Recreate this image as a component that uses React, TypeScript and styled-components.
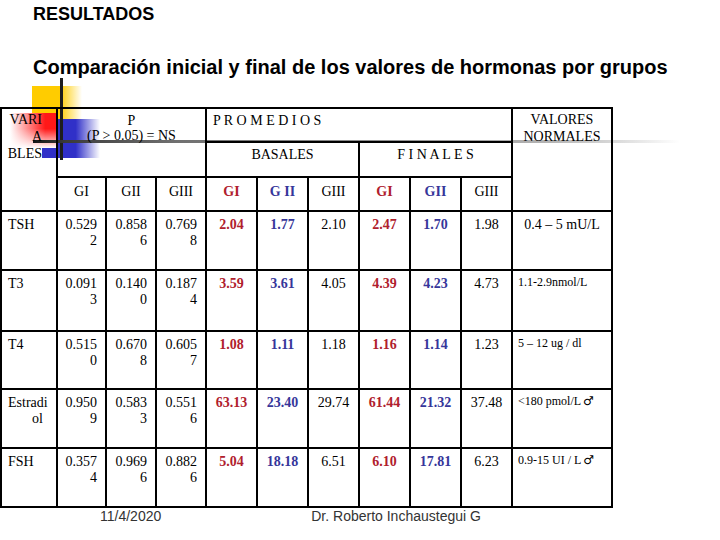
import React from 'react';
import styled, { createGlobalStyle } from 'styled-components';

const Global = createGlobalStyle`
  html, body { margin: 0; padding: 0; background: #fff; }
  body { width: 720px; height: 540px; overflow: hidden; }
`;

const Page = styled.div`
  position: relative;
  width: 720px;
  height: 540px;
  background: #fff;
  overflow: hidden;
`;

const Header = styled.header`
  position: relative;
  z-index: 2;
  height: 107px;
  box-sizing: border-box;
  padding: 5px 0 0 33px;
  font-family: "Liberation Sans", Arial, sans-serif;
  font-weight: bold;
  color: #000;
`;

const Title = styled.h1`
  margin: 0;
  font-size: 18px;
  line-height: 18px;
  font-weight: bold;
`;

const Subtitle = styled.h2`
  margin: 34px 0 0;
  font-size: 20px;
  line-height: 20px;
  font-weight: bold;
  white-space: nowrap;
`;

/* decorative PowerPoint ornaments (lie under the table) */
const YellowBlock = styled.div`
  position: absolute;
  left: 32px;
  top: 86px;
  width: 50px;
  height: 33px;
  background: linear-gradient(to right, #ffcc00 0%, #ffcc00 55%, rgba(255, 204, 0, 0) 100%);
`;

const BlueBlock = styled.div`
  position: absolute;
  left: 42px;
  top: 119px;
  width: 58px;
  height: 39px;
  background: linear-gradient(to right, #3030c8 0%, #3030c8 58%, rgba(48, 48, 200, 0) 100%);
`;

const RedBlock = styled.div`
  position: absolute;
  left: 10px;
  top: 113px;
  width: 47px;
  height: 35px;
  background:
    linear-gradient(to bottom, rgba(255, 255, 255, 0) 0%, rgba(255, 255, 255, 0) 45%, #fff 100%),
    linear-gradient(to left, #ff1818 0%, #ff1818 25%, #fff 100%);
`;

const VRule = styled.div`
  position: absolute;
  left: 60px;
  top: 78px;
  width: 3px;
  height: 82px;
  background: #1e1e1e;
`;

const HRule = styled.div`
  position: absolute;
  left: 33px;
  top: 140px;
  width: 647px;
  height: 3px;
  background: linear-gradient(
    to right,
    #151515 0%,
    #3a3a3a 5%,
    #707070 22%,
    #8c8c8c 50%,
    #b4b4b4 80%,
    rgba(255, 255, 255, 0) 100%
  );
`;

const Table = styled.div`
  position: relative;
  z-index: 1;
  display: grid;
  grid-template-columns: 56px 49px 50px 50px repeat(6, 51px) 100px;
  grid-template-rows: 34px 35px 34px 59px 61px 58px 59px 59px;
  width: 613px;
  box-sizing: border-box;
  border-top: 2px solid #000;
  border-left: 2px solid #000;
  font-family: "Liberation Serif", "Times New Roman", serif;
  font-size: 14px;
  color: #000;
`;

type Align = 'left' | 'center' | 'right';

const Cell = styled.div<{ $area?: string; $align?: Align; $pad?: string; $lh?: number }>`
  grid-area: ${(p) => p.$area ?? 'auto'};
  box-sizing: border-box;
  min-width: 0;
  border-right: 2px solid #000;
  border-bottom: 2px solid #000;
  padding: ${(p) => p.$pad ?? '5px 0 0'};
  text-align: ${(p) => p.$align ?? 'center'};
  line-height: ${(p) => p.$lh ?? 16}px;
  white-space: nowrap;
`;

const Line = styled.span<{ $indent?: number }>`
  display: block;
  padding-left: ${(p) => p.$indent ?? 0}px;
`;

type Tone = 'red' | 'blue' | 'plain';

const Toned = styled.span<{ $tone: Tone }>`
  color: ${(p) => (p.$tone === 'red' ? '#b0202d' : p.$tone === 'blue' ? '#36369a' : '#000')};
  font-weight: ${(p) => (p.$tone === 'plain' ? 'normal' : 'bold')};
`;

const NormalText = styled.span<{ $small?: boolean }>`
  font-size: ${(p) => (p.$small ? 12 : 14)}px;
`;

const Male = styled.span`
  font-family: "DejaVu Sans", sans-serif;
  font-size: 12px;
  font-weight: bold;
  margin-left: 2px;
`;

const Footer = styled.footer`
  position: relative;
  z-index: 1;
  display: flex;
  gap: 150px;
  padding-left: 100px;
  font-family: "Liberation Sans", Arial, sans-serif;
  font-size: 14px;
  line-height: 16px;
  color: #333;
`;

type Row = {
  label: string[];
  p: [string, string][];
  basal: string[];
  final: string[];
  normal: string;
  male?: boolean;
  centered?: boolean;
};

const rows: Row[] = [
  {
    label: ['TSH'],
    p: [['0.529', '2'], ['0.858', '6'], ['0.769', '8']],
    basal: ['2.04', '1.77', '2.10'],
    final: ['2.47', '1.70', '1.98'],
    normal: '0.4 – 5 mU/L',
    centered: true,
  },
  {
    label: ['T3'],
    p: [['0.091', '3'], ['0.140', '0'], ['0.187', '4']],
    basal: ['3.59', '3.61', '4.05'],
    final: ['4.39', '4.23', '4.73'],
    normal: '1.1-2.9nmol/L',
  },
  {
    label: ['T4'],
    p: [['0.515', '0'], ['0.670', '8'], ['0.605', '7']],
    basal: ['1.08', '1.11', '1.18'],
    final: ['1.16', '1.14', '1.23'],
    normal: '5 – 12 ug / dl',
  },
  {
    label: ['Estradi', 'ol'],
    p: [['0.950', '9'], ['0.583', '3'], ['0.551', '6']],
    basal: ['63.13', '23.40', '29.74'],
    final: ['61.44', '21.32', '37.48'],
    normal: '<180 pmol/L',
    male: true,
  },
  {
    label: ['FSH'],
    p: [['0.357', '4'], ['0.969', '6'], ['0.882', '6']],
    basal: ['5.04', '18.18', '6.51'],
    final: ['6.10', '17.81', '6.23'],
    normal: '0.9-15 UI / L',
    male: true,
  },
];

const tones: Tone[] = ['red', 'blue', 'plain'];

const groupHeads: { text: string; tone: Tone }[] = [
  { text: 'GI', tone: 'plain' },
  { text: 'GII', tone: 'plain' },
  { text: 'GIII', tone: 'plain' },
  { text: 'GI', tone: 'red' },
  { text: 'G II', tone: 'blue' },
  { text: 'GIII', tone: 'plain' },
  { text: 'GI', tone: 'red' },
  { text: 'GII', tone: 'blue' },
  { text: 'GIII', tone: 'plain' },
];

export default function App() {
  return (
    <Page>
      <Global />
      <YellowBlock />
      <BlueBlock />
      <RedBlock />
      <VRule />
      <HRule />
      <Header>
        <Title>RESULTADOS</Title>
        <Subtitle>Comparación inicial y final de los valores de hormonas por grupos</Subtitle>
      </Header>
      <Table>
        <Cell $area="1 / 1 / 4 / 2" $align="right" $pad="2px 14px 0 0" $lh={17}>
          <Line>VARI</Line>
          <Line>A</Line>
          <Line>BLES</Line>
        </Cell>
        <Cell $area="1 / 2 / 3 / 5" $pad="4px 0 0" $lh={15}>
          <Line>P</Line>
          <Line>(P &gt; 0.05) = NS</Line>
        </Cell>
        <Cell $area="1 / 5 / 2 / 11" $align="left" $pad="4px 0 0 6px">
          P R O M E D I O S
        </Cell>
        <Cell $area="1 / 11 / 4 / 12" $pad="2px 0 0" $lh={17}>
          <Line>VALORES</Line>
          <Line>NORMALES</Line>
        </Cell>
        <Cell $area="2 / 5 / 3 / 8" $pad="4px 0 0">
          BASALES
        </Cell>
        <Cell $area="2 / 8 / 3 / 11" $pad="4px 0 0">
          F I N A L E S
        </Cell>
        {groupHeads.map((g, i) => (
          <Cell key={`h${i}`} $area={`3 / ${i + 2} / 4 / ${i + 3}`} $pad="6px 0 0">
            <Toned $tone={g.tone}>{g.text}</Toned>
          </Cell>
        ))}
        {rows.map((r, ri) => {
          const rowLine = ri + 4;
          return (
            <React.Fragment key={r.label.join('')}>
              <Cell $area={`${rowLine} / 1 / ${rowLine + 1} / 2`} $align="left" $pad="5px 0 0 6px">
                {r.label.map((l, li) => (
                  <Line key={li} $indent={li === 1 ? 24 : 0}>
                    {l}
                  </Line>
                ))}
              </Cell>
              {r.p.map(([a, b], pi) => (
                <Cell
                  key={`p${pi}`}
                  $area={`${rowLine} / ${pi + 2} / ${rowLine + 1} / ${pi + 3}`}
                  $align="right"
                  $pad="5px 8px 0 0"
                >
                  <Line>{a}</Line>
                  <Line>{b}</Line>
                </Cell>
              ))}
              {[...r.basal, ...r.final].map((v, vi) => (
                <Cell key={`v${vi}`} $area={`${rowLine} / ${vi + 5} / ${rowLine + 1} / ${vi + 6}`}>
                  <Toned $tone={tones[vi % 3]}>{v}</Toned>
                </Cell>
              ))}
              <Cell
                $area={`${rowLine} / 11 / ${rowLine + 1} / 12`}
                $align={r.centered ? 'center' : 'left'}
                $pad={r.centered ? '5px 0 0' : '3px 0 0 5px'}
              >
                <NormalText $small={!r.centered}>{r.normal}</NormalText>
                {r.male && <Male>♂</Male>}
              </Cell>
            </React.Fragment>
          );
        })}
      </Table>
      <Footer>
        <span>11/4/2020</span>
        <span>Dr. Roberto Inchaustegui G</span>
      </Footer>
    </Page>
  );
}
